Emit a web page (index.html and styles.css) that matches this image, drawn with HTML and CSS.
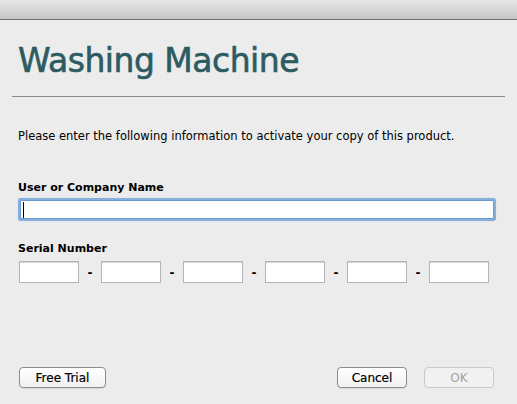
FILE: index.html
```html
<!DOCTYPE html>
<html>
<head>
<meta charset="utf-8">
<title>Washing Machine</title>
<link rel="stylesheet" href="styles.css">
</head>
<body>
<div class="titlebar"></div>
<div class="content">
  <h1 class="title">Washing Machine</h1>
  <div class="rule"></div>
  <p class="intro">Please enter the following information to activate your copy of this product.</p>
  <div class="label label-name">User or Company Name</div>
  <div class="name-input"><span class="caret"></span></div>
  <div class="label label-serial">Serial Number</div>
  <div class="serial-row">
    <div class="serial-box"></div><span class="dash">-</span>
    <div class="serial-box"></div><span class="dash">-</span>
    <div class="serial-box"></div><span class="dash">-</span>
    <div class="serial-box"></div><span class="dash">-</span>
    <div class="serial-box"></div><span class="dash">-</span>
    <div class="serial-box"></div>
  </div>
  <div class="buttons">
    <button class="btn btn-trial">Free Trial</button>
    <div class="spacer"></div>
    <button class="btn btn-cancel">Cancel</button>
    <button class="btn btn-ok" disabled>OK</button>
  </div>
</div>
</body>
</html>
```
FILE: styles.css
```css
html, body {
  margin: 0;
  padding: 0;
}
body {
  width: 517px;
  height: 404px;
  background: #ececec;
  font-family: "DejaVu Sans", "Liberation Sans", sans-serif;
  color: #000;
  overflow: hidden;
}
.titlebar {
  height: 19px;
  background: linear-gradient(#e6e6e6, #c6c6c6);
  border-bottom: 1px solid #6f6f6f;
}
.content {
  display: flex;
  flex-direction: column;
}
.title {
  margin: 22px 0 0 18px;
  font-size: 33px;
  line-height: 38px;
  font-weight: normal;
  letter-spacing: -0.5px;
  color: #2d5b62;
  -webkit-text-stroke: 0.6px #2d5b62;
}
.rule {
  margin: 16px 0 0 12px;
  width: 493px;
  height: 1px;
  background: #8a8a8a;
}
.intro {
  margin: 32px 0 0 18px;
  font-size: 11.5px;
  line-height: 14px;
}
.label {
  margin-left: 18px;
  font-size: 11px;
  line-height: 13px;
  font-weight: bold;
}
.label-name {
  margin-top: 38px;
}
.name-input {
  margin: 4px 0 0 18px;
  width: 478px;
  height: 23px;
  box-sizing: border-box;
  background: #fff;
  border: 2px solid #86afdc;
  border-radius: 3px;
  box-shadow: inset 0 0 0 1px #6d9ace, 0 0 1px 0 #a9c6e8;
  display: flex;
  align-items: center;
  padding-left: 3px;
}
.caret {
  width: 1px;
  height: 16px;
  background: #000;
}
.label-serial {
  margin-top: 21px;
}
.serial-row {
  margin: 5px 0 0 19px;
  display: flex;
  align-items: center;
}
.serial-box {
  width: 60px;
  height: 22px;
  box-sizing: border-box;
  background: #fff;
  border: 1px solid #b4b4b4;
  box-shadow: inset 0 1px 0 #d8d8d8;
}
.dash {
  width: 22px;
  text-align: center;
  font-size: 12px;
  font-weight: bold;
  line-height: 22px;
  padding-top: 2px;
}
.buttons {
  margin: 83px 23px 0 19px;
  display: flex;
  align-items: center;
  gap: 17px;
}
.spacer {
  flex: 1;
}
.btn {
  height: 21px;
  box-sizing: border-box;
  padding: 0;
  font-family: "DejaVu Sans", "Liberation Sans", sans-serif;
  font-size: 12px;
  color: #000;
  -webkit-text-stroke: 0.2px #000;
  background: linear-gradient(#ffffff, #f1f1f1);
  border: 1px solid #8d8d8d;
  border-radius: 4px;
  box-shadow: 0 1px 0 rgba(0,0,0,0.08);
}
.btn-trial {
  width: 87px;
}
.btn-cancel {
  width: 70px;
}
.btn-ok {
  width: 70px;
  color: #a3a3a3;
  -webkit-text-stroke: 0;
  border-color: #c9c9c9;
  background: #f1f1f1;
  box-shadow: none;
}
```
